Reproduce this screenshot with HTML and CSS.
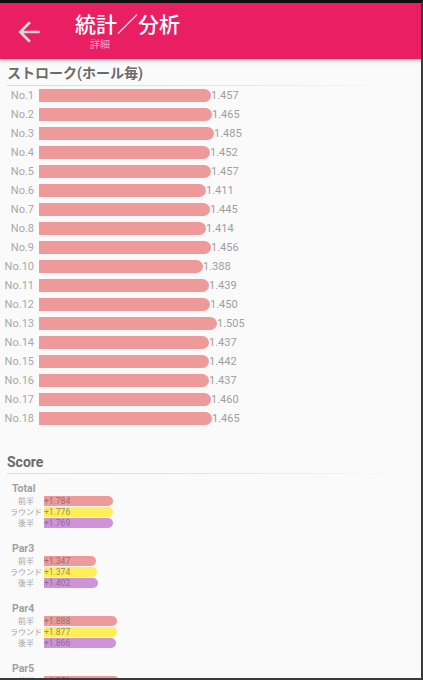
FILE: index.html
```html
<!DOCTYPE html>
<html lang="ja">
<head>
<meta charset="utf-8">
<title>統計／分析</title>
<link rel="stylesheet" href="styles.css">
</head>
<body>
<div class="screen">
  <header class="appbar">
    <svg class="back" viewBox="0 0 24 24" width="32" height="32" aria-hidden="true">
      <path d="M20 11H7.83l5.59-5.59L12 4l-8 8 8 8 1.41-1.41L7.83 13H20v-2z"/>
    </svg>
    <div class="titles">
      <div class="title">統計／分析</div>
      <div class="subtitle">詳細</div>
    </div>
  </header>

  <main class="content">
    <section class="section">
      <h2 class="section-title">ストローク(ホール毎)</h2>
      <div class="rule"></div>
      <div class="holes">
        <div class="hole"><span class="hole-no">No.1</span><span class="bar" style="width:172px"></span><span class="val">1.457</span></div>
        <div class="hole"><span class="hole-no">No.2</span><span class="bar" style="width:173px"></span><span class="val">1.465</span></div>
        <div class="hole"><span class="hole-no">No.3</span><span class="bar" style="width:175px"></span><span class="val">1.485</span></div>
        <div class="hole"><span class="hole-no">No.4</span><span class="bar" style="width:171px"></span><span class="val">1.452</span></div>
        <div class="hole"><span class="hole-no">No.5</span><span class="bar" style="width:172px"></span><span class="val">1.457</span></div>
        <div class="hole"><span class="hole-no">No.6</span><span class="bar" style="width:167px"></span><span class="val">1.411</span></div>
        <div class="hole"><span class="hole-no">No.7</span><span class="bar" style="width:171px"></span><span class="val">1.445</span></div>
        <div class="hole"><span class="hole-no">No.8</span><span class="bar" style="width:167px"></span><span class="val">1.414</span></div>
        <div class="hole"><span class="hole-no">No.9</span><span class="bar" style="width:172px"></span><span class="val">1.456</span></div>
        <div class="hole"><span class="hole-no">No.10</span><span class="bar" style="width:164px"></span><span class="val">1.388</span></div>
        <div class="hole"><span class="hole-no">No.11</span><span class="bar" style="width:170px"></span><span class="val">1.439</span></div>
        <div class="hole"><span class="hole-no">No.12</span><span class="bar" style="width:171px"></span><span class="val">1.450</span></div>
        <div class="hole"><span class="hole-no">No.13</span><span class="bar" style="width:178px"></span><span class="val">1.505</span></div>
        <div class="hole"><span class="hole-no">No.14</span><span class="bar" style="width:170px"></span><span class="val">1.437</span></div>
        <div class="hole"><span class="hole-no">No.15</span><span class="bar" style="width:170px"></span><span class="val">1.442</span></div>
        <div class="hole"><span class="hole-no">No.16</span><span class="bar" style="width:170px"></span><span class="val">1.437</span></div>
        <div class="hole"><span class="hole-no">No.17</span><span class="bar" style="width:172px"></span><span class="val">1.460</span></div>
        <div class="hole"><span class="hole-no">No.18</span><span class="bar" style="width:173px"></span><span class="val">1.465</span></div>
      </div>
    </section>

    <section class="section score">
      <h2 class="section-title">Score</h2>
      <div class="rule"></div>

      <div class="group">
        <div class="group-title">Total</div>
        <div class="srow"><span class="slabel">前半</span><span class="sbar first" style="width:69px">+1.784</span></div>
        <div class="srow"><span class="slabel">ラウンド</span><span class="sbar round" style="width:69px">+1.776</span></div>
        <div class="srow"><span class="slabel">後半</span><span class="sbar second" style="width:69px">+1.769</span></div>
      </div>

      <div class="group">
        <div class="group-title">Par3</div>
        <div class="srow"><span class="slabel">前半</span><span class="sbar first" style="width:52px">+1.347</span></div>
        <div class="srow"><span class="slabel">ラウンド</span><span class="sbar round" style="width:53px">+1.374</span></div>
        <div class="srow"><span class="slabel">後半</span><span class="sbar second" style="width:54px">+1.402</span></div>
      </div>

      <div class="group">
        <div class="group-title">Par4</div>
        <div class="srow"><span class="slabel">前半</span><span class="sbar first" style="width:73px">+1.888</span></div>
        <div class="srow"><span class="slabel">ラウンド</span><span class="sbar round" style="width:73px">+1.877</span></div>
        <div class="srow"><span class="slabel">後半</span><span class="sbar second" style="width:72px">+1.866</span></div>
      </div>

      <div class="group">
        <div class="group-title">Par5</div>
        <div class="srow"><span class="slabel">前半</span><span class="sbar first" style="width:75px">+1.951</span></div>
        <div class="srow"><span class="slabel">ラウンド</span><span class="sbar round" style="width:74px">+1.930</span></div>
        <div class="srow"><span class="slabel">後半</span><span class="sbar second" style="width:74px">+1.912</span></div>
      </div>
    </section>
  </main>
</div>
</body>
</html>
```

FILE: styles.css
```css
* {
  box-sizing: border-box;
}

html, body {
  margin: 0;
  padding: 0;
  background: #2a2a2a;
}

body {
  font-family: Roboto, "Noto Sans CJK JP", sans-serif;
}

.screen {
  width: 423px;
  height: 680px;
  overflow: hidden;
  background: #fafafa;
  border-top: 3px solid #0e0e0e;
  border-right: 2px solid #3a3a3a;
  border-bottom: 2px solid #3a3a3a;
  display: flex;
  flex-direction: column;
}

/* ---------- app bar ---------- */
.appbar {
  position: relative;
  z-index: 1;
  flex: none;
  height: 56px;
  background: #e91e63;
  display: flex;
  align-items: flex-start;
  box-shadow: 0 2px 4px rgba(0, 0, 0, 0.22);
}

.back {
  flex: none;
  margin: 13px 0 0 13px;
  fill: #d9d9d9;
}

.titles {
  margin: 8px 0 0 30px;
  font-family: "Noto Sans CJK JP", sans-serif;
}

.title {
  color: #ffffff;
  font-size: 21px;
  line-height: 25px;
  font-weight: 500;
}

.subtitle {
  margin-left: 15px;
  color: #f7a7c4;
  font-size: 10px;
  line-height: 15px;
}

/* ---------- content ---------- */
.content {
  flex: 1;
  overflow: hidden;
}

.section-title {
  margin: 0;
  padding: 5px 0 0 7px;
  font-family: Roboto, "Noto Sans CJK JP", sans-serif;
  font-size: 14px;
  line-height: 18px;
  font-weight: 700;
  color: #6a6a6a;
}

.rule {
  margin: 3px 23px 0 7px;
  height: 1px;
  background: linear-gradient(to right, #f6cfd9 0%, #f8dde4 60%, rgba(250, 250, 250, 0) 100%);
}

/* hole bars */
.hole {
  display: flex;
  align-items: center;
  height: 19px;
}

.hole-no {
  flex: none;
  width: 34px;
  margin-right: 5px;
  text-align: right;
  font-size: 11px;
  color: #a8a8a8;
}

.bar {
  flex: none;
  height: 13px;
  background: #ef9a9a;
  border-radius: 0 7px 7px 0;
}

.val {
  font-size: 11px;
  color: #9e9e9e;
}

/* score groups */
.score {
  margin-top: 20px;
}

.score .rule {
  margin-top: 2px;
}

.group {
  padding-top: 12px;
  margin-bottom: 2px;
}

.rule + .group {
  padding-top: 8px;
}

.group-title {
  padding-left: 12px;
  font-size: 10.5px;
  line-height: 13px;
  font-weight: 700;
  color: #a0a0a0;
}

.srow {
  display: flex;
  align-items: center;
  height: 11px;
}

.slabel {
  flex: none;
  width: 44px;
  padding-left: 8px;
  text-align: center;
  font-family: "Noto Sans CJK JP", sans-serif;
  font-size: 8px;
  color: #a6a6a6;
  white-space: nowrap;
}

.sbar {
  flex: none;
  height: 10px;
  border-radius: 0 5px 5px 0;
  font-size: 8.5px;
  line-height: 10px;
  color: #8e8e8e;
  white-space: nowrap;
}

.sbar.first {
  background: #ef9a9a;
  color: #9a6e6e;
}

.sbar.round {
  background: #ffee58;
  color: #9a9152;
}

.sbar.second {
  background: #ce93d8;
  color: #86708c;
}
```
